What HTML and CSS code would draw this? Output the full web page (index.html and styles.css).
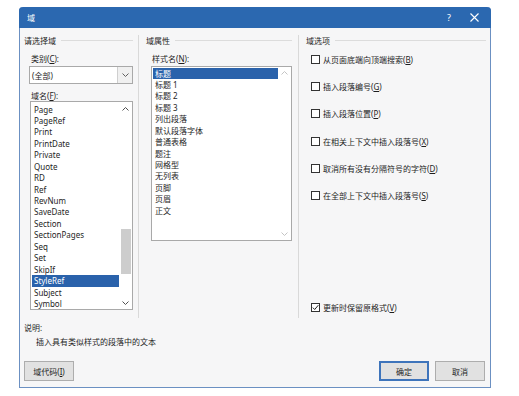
FILE: index.html
```html
<!DOCTYPE html>
<html lang="zh-CN">
<head>
  <meta charset="UTF-8" />
  <title>域</title>
  <link rel="stylesheet" href="styles.css">
</head>
<body>
  <div class="dialog">
    <div class="titlebar">
      <span class="title">域</span>
      <span class="help">?</span>
      <svg class="close" width="9" height="9" viewBox="0 0 9 9"><path d="M0.5 0.5 L8.5 8.5 M8.5 0.5 L0.5 8.5" stroke="#fff" stroke-width="1.1" fill="none"/></svg>
    </div>

    <div class="main">
      <!-- 请选择域 -->
      <div class="col col-left">
        <div class="group-head"><span>请选择域</span><i></i></div>
        <div class="label">类别(<u>C</u>):</div>
        <div class="combo">
          <span class="combo-text">(全部)</span>
          <span class="combo-btn">
            <svg width="7" height="4" viewBox="0 0 7 4"><polyline points="0.5,0.5 3.5,3.5 6.5,0.5" stroke="#606060" fill="none"/></svg>
          </span>
        </div>
        <div class="label label-tight">域名(<u>F</u>):</div>
        <div class="listbox list-fields">
          <ul class="items">
            <li>Page</li>
            <li>PageRef</li>
            <li>Print</li>
            <li>PrintDate</li>
            <li>Private</li>
            <li>Quote</li>
            <li>RD</li>
            <li>Ref</li>
            <li>RevNum</li>
            <li>SaveDate</li>
            <li>Section</li>
            <li>SectionPages</li>
            <li>Seq</li>
            <li>Set</li>
            <li>SkipIf</li>
            <li class="selected">StyleRef</li>
            <li>Subject</li>
            <li>Symbol</li>
          </ul>
          <div class="scrollbar">
            <svg class="arrow" width="7" height="4" viewBox="0 0 7 4"><polyline points="0.5,3.5 3.5,0.5 6.5,3.5" stroke="#505050" fill="none"/></svg>
            <div class="track"><div class="thumb"></div></div>
            <svg class="arrow" width="7" height="4" viewBox="0 0 7 4"><polyline points="0.5,0.5 3.5,3.5 6.5,0.5" stroke="#505050" fill="none"/></svg>
          </div>
        </div>
      </div>

      <!-- 域属性 -->
      <div class="col col-mid">
        <div class="group-head"><span>域属性</span><i></i></div>
        <div class="label">样式名(<u>N</u>):</div>
        <div class="listbox list-styles">
          <ul class="items">
            <li class="selected">标题</li>
            <li>标题 1</li>
            <li>标题 2</li>
            <li>标题 3</li>
            <li>列出段落</li>
            <li>默认段落字体</li>
            <li>普通表格</li>
            <li>题注</li>
            <li>网格型</li>
            <li>无列表</li>
            <li>页脚</li>
            <li>页眉</li>
            <li>正文</li>
          </ul>
          <div class="scrollbar disabled">
            <svg class="arrow" width="7" height="4" viewBox="0 0 7 4"><polyline points="0.5,3.5 3.5,0.5 6.5,3.5" stroke="#c4c4c4" fill="none"/></svg>
            <div class="track"></div>
            <svg class="arrow" width="7" height="4" viewBox="0 0 7 4"><polyline points="0.5,0.5 3.5,3.5 6.5,0.5" stroke="#c4c4c4" fill="none"/></svg>
          </div>
        </div>
      </div>

      <!-- 域选项 -->
      <div class="col col-right">
        <div class="group-head"><span>域选项</span><i></i></div>
        <div class="options">
          <label class="check"><span class="box"></span>从页面底端向顶端搜索(<u>B</u>)</label>
          <label class="check"><span class="box"></span>插入段落编号(<u>G</u>)</label>
          <label class="check"><span class="box"></span>插入段落位置(<u>P</u>)</label>
          <label class="check"><span class="box"></span>在相关上下文中插入段落号(<u>X</u>)</label>
          <label class="check"><span class="box"></span>取消所有没有分隔符号的字符(<u>D</u>)</label>
          <label class="check"><span class="box"></span>在全部上下文中插入段落号(<u>S</u>)</label>
        </div>
        <label class="check keep"><span class="box checked">
          <svg width="7" height="7" viewBox="0 0 7 7"><polyline points="0.8,3.6 2.7,5.5 6.3,1.2" stroke="#222" stroke-width="1" fill="none"/></svg>
        </span>更新时保留原格式(<u>V</u>)</label>
      </div>
    </div>

    <div class="desc">
      <div class="desc-title">说明:</div>
      <div class="desc-text">插入具有类似样式的段落中的文本</div>
    </div>

    <div class="footer">
      <button class="btn">域代码(<u>I</u>)</button>
      <span class="spacer"></span>
      <button class="btn btn-default">确定</button>
      <button class="btn">取消</button>
    </div>
  </div>
</body>
</html>
```

FILE: styles.css
```css
body {
  margin: 0;
  background: #ffffff;
  font-family: "Noto Sans", "Noto Sans CJK SC", sans-serif;
  font-size: 8px;
  color: #1e1e1e;
}

.dialog {
  margin: 7px 0 0 19px;
  width: 472px;
  height: 381px;
  box-sizing: border-box;
  background: #f6f6f7;
  border: 1px solid #6b90c2;
  border-top: none;
  border-radius: 4px 4px 0 0;
  display: flex;
  flex-direction: column;
}

.titlebar {
  height: 21px;
  margin: 0 -1px;
  background: #2b68b0;
  border-radius: 4px 4px 0 0;
  display: flex;
  align-items: center;
  color: #fff;
}

.title {
  margin-left: 8px;
  font-size: 8px;
  font-family: "Noto Sans CJK SC", sans-serif;
}

.help {
  margin-left: auto;
  font-size: 9px;
  margin-right: 19px;
}

.close {
  margin-right: 12px;
}

.main {
  display: flex;
  height: 290px;
  box-sizing: border-box;
  padding: 7px 4px 0 4px;
}

.col {
  display: flex;
  flex-direction: column;
  box-sizing: border-box;
}

.col-left {
  width: 114px;
  padding-right: 5px;
}

.col-mid {
  width: 160px;
  border-left: 1px solid #d9d9d9;
  padding-left: 7px;
  padding-right: 6px;
}

.col-right {
  flex: 1;
  border-left: 1px solid #d9d9d9;
  padding-left: 7px;
  padding-bottom: 5px;
}

.group-head {
  display: flex;
  align-items: center;
  height: 11px;
  line-height: 11px;
}

.group-head i {
  flex: 1;
  height: 0;
  border-top: 1px solid #dcdcdc;
  margin-left: 5px;
}

.label {
  height: 11px;
  line-height: 11px;
  margin-top: 7px;
  padding-left: 7px;
}

.col-mid .label {
  padding-left: 6px;
}

.label-tight {
  margin-top: 6px;
}

.combo {
  margin: 2px 0 0 5px;
  height: 18px;
  box-sizing: border-box;
  background: #fff;
  border: 1px solid #a9a9a9;
  display: flex;
  align-items: center;
}

.combo-text {
  flex: 1;
  padding-left: 2px;
}

.combo-btn {
  width: 14px;
  height: 16px;
  border-left: 1px solid #cfcfcf;
  background: #f0f0f0;
  display: flex;
  align-items: center;
  justify-content: center;
}

.listbox {
  background: #fff;
  border: 1px solid #a9a9a9;
  box-sizing: border-box;
  display: flex;
}

.list-fields {
  margin-left: 6px;
  height: 209px;
  padding-top: 1.5px;
}

.list-styles {
  margin: 2px 0 0 5px;
  height: 175px;
  padding-top: 0.5px;
}

.items {
  list-style: none;
  margin: 0;
  padding: 0 0 0 1px;
  flex: 1;
  overflow: hidden;
}

.items li {
  height: 11.45px;
  line-height: 11.45px;
  padding-left: 2px;
  white-space: nowrap;
}

.items li.selected {
  background: #2a62ab;
  color: #fff;
}

.scrollbar {
  width: 13px;
  display: flex;
  flex-direction: column;
  align-items: center;
  padding: 3px 0 4px;
}

.scrollbar .track {
  flex: 1;
  width: 11px;
  margin: 5px 0;
  position: relative;
}

.thumb {
  position: absolute;
  left: 1px;
  right: 0;
  top: 113px;
  height: 45px;
  background: #cdcdcd;
}

.options {
  display: flex;
  flex-direction: column;
  gap: 16.4px;
  margin-top: 7.5px;
}

.check {
  display: flex;
  align-items: center;
  height: 11px;
  line-height: 11px;
  padding-left: 5px;
  white-space: nowrap;
}

.box {
  width: 9px;
  height: 9px;
  box-sizing: border-box;
  border: 1px solid #333;
  background: #fff;
  margin-right: 3px;
  display: flex;
  align-items: center;
  justify-content: center;
}

.keep {
  margin-top: auto;
}

.desc {
  padding-left: 4px;
}

.desc-title {
  margin-top: 4px;
  height: 11px;
  line-height: 11px;
}

.desc-text {
  margin-top: 3px;
  padding-left: 12px;
  height: 11px;
  line-height: 11px;
}

.footer {
  display: flex;
  gap: 6px;
  margin-top: 14px;
  padding: 0 5px 0 4px;
}

.spacer {
  flex: 1;
}

.btn {
  width: 50px;
  height: 20px;
  box-sizing: border-box;
  background: #e1e1e1;
  border: 1px solid #adadad;
  font-family: "Noto Sans", "Noto Sans CJK SC", sans-serif;
  font-size: 8px;
  color: #1e1e1e;
  padding: 0;
}

.btn-default {
  border: 2px solid #3e74bb;
}
```
